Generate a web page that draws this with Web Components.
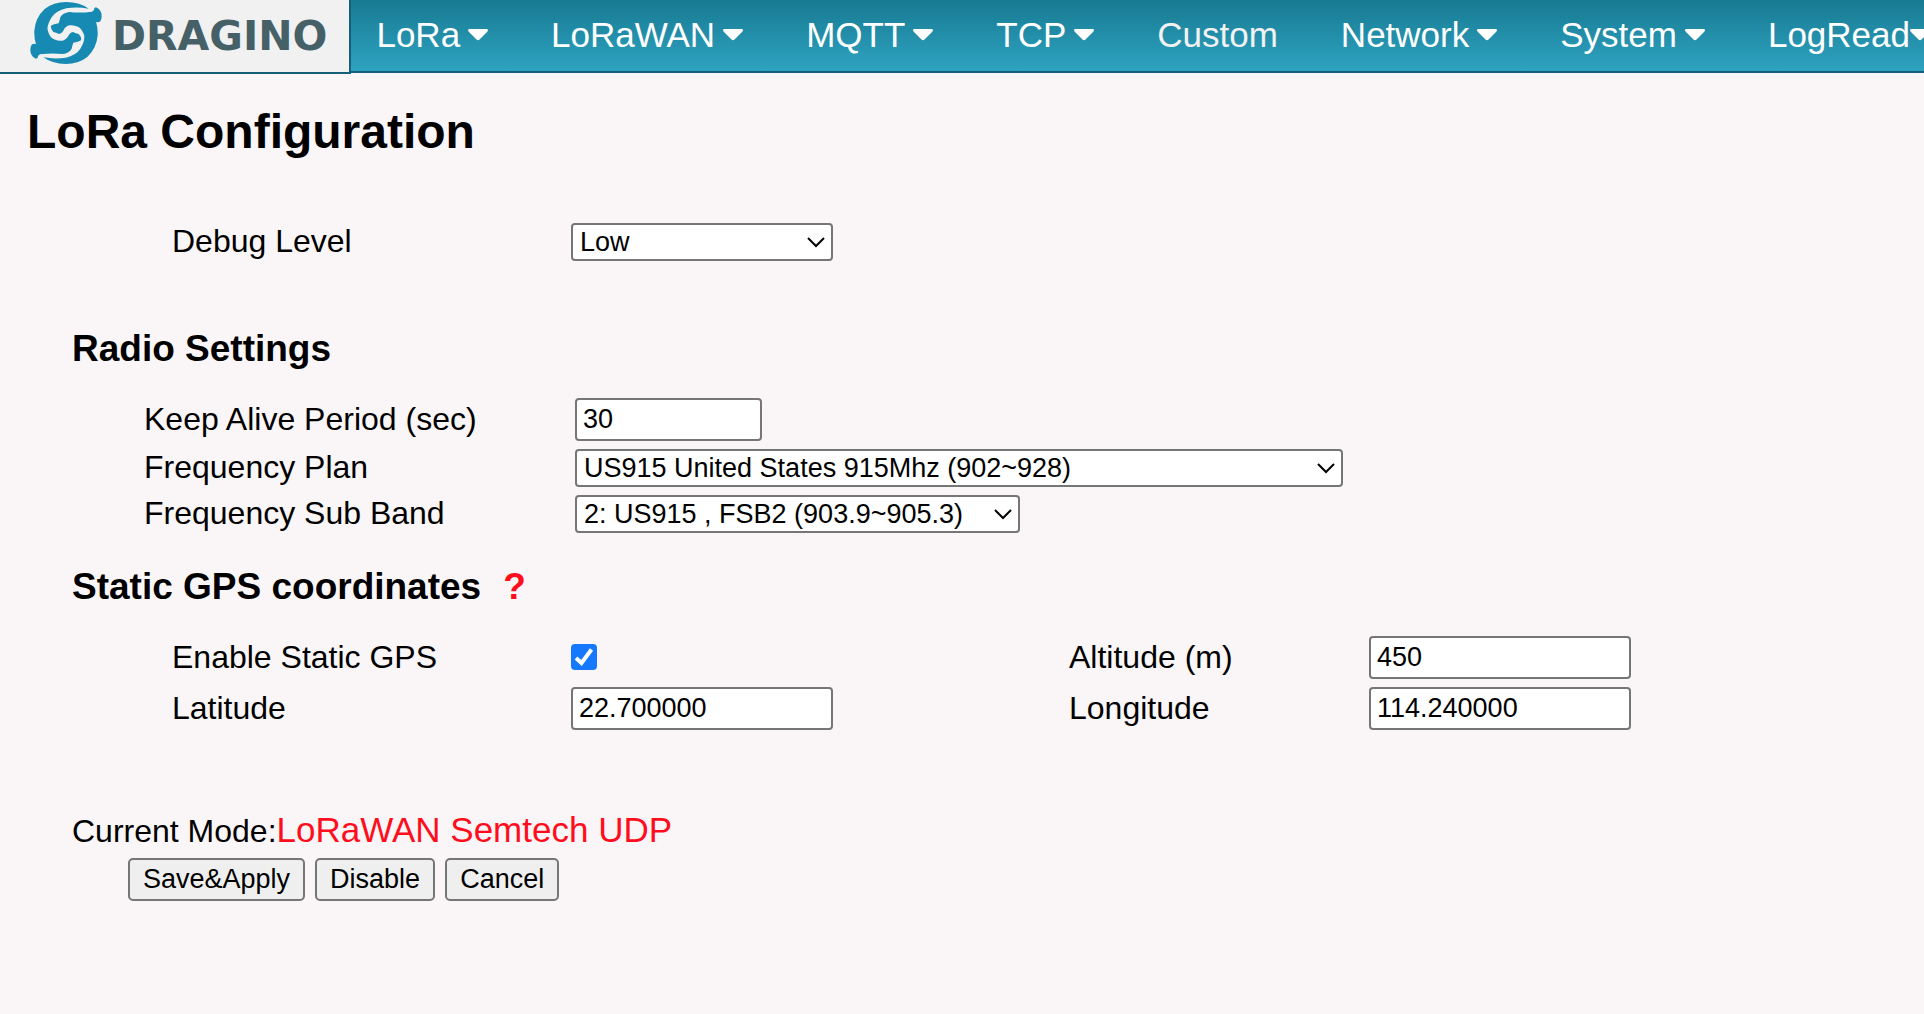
<!DOCTYPE html>
<html lang="en">
<head>
<meta charset="utf-8">
<title>LoRa Configuration</title>
<style>
  html { background: #faf6f8; }
  body { margin: 0; color: #000; font-family: "Liberation Sans", Arial, sans-serif; font-size: 32px; }
</style>
</head>
<body>
<app-header>
  <nav-item menu>LoRa</nav-item>
  <nav-item menu>LoRaWAN</nav-item>
  <nav-item menu>MQTT</nav-item>
  <nav-item menu>TCP</nav-item>
  <nav-item>Custom</nav-item>
  <nav-item menu>Network</nav-item>
  <nav-item menu>System</nav-item>
  <nav-item menu tight>LogRead</nav-item>
</app-header>
<lora-config></lora-config>

<template id="brand-logo">
  <style>
    :host { display: block; }
    a { display: flex; align-items: center; gap: 10px; height: 72px; padding: 0 22px 0 30px;
        color: #466068; text-decoration: none; font: bold 41px/46px "DejaVu Sans", sans-serif; }
    svg { flex: none; width: 72px; height: 62px; margin-bottom: 6px; }
  </style>
  <a href="#">
    <svg viewBox="90 6 216 186" fill="#168ab2" aria-hidden="true">
      <path d="M288 22Q300 27 304 40Q307 55 301 64Q296 68 288 66Q294 82 293 106Q290 145 262 171Q235 192 198 192Q155 191 130 172Q165 178 197 173Q228 166 241 146Q254 126 253 108Q248 88 234 80Q220 74 208 76Q195 80 190 92Q184 102 177 102Q168 97 160 96Q151 87 153 77Q160 72 176 70Q179 62 181 52Q188 39 208 36Q240 40 276 35Q284 31 283 24Z"/>
      <path d="M108 176Q96 171 92 158Q89 143 95 134Q100 130 108 132Q102 116 103 92Q106 53 134 27Q161 6 198 6Q241 7 266 26Q231 20 199 25Q168 32 155 52Q140 76 143 90Q148 112 162 118Q176 124 188 122Q201 118 206 106Q212 96 219 96Q228 101 236 102Q245 111 243 121Q236 126 220 128Q217 136 215 146Q208 159 188 162Q156 158 120 163Q112 167 113 174Z"/>
    </svg>
    <span>DRAGINO</span>
  </a>
</template>

<template id="app-header">
  <style>
    :host { display: flex; align-items: flex-start; overflow: hidden; }
    brand-logo { flex: none; background: #f1f1f1; border: solid #14607a; border-width: 0 2px 2px 0; }
    nav { flex: 1; min-width: 0; display: flex; gap: 63px; height: 71px; padding-left: 25px;
          background: linear-gradient(#187a92, #2ea3c1); border-bottom: 2px solid #14607a; overflow: hidden; }
  </style>
  <brand-logo></brand-logo>
  <nav><slot></slot></nav>
</template>

<template id="nav-item">
  <style>
    :host { display: block; flex: none; }
    a { display: flex; align-items: center; gap: 8px; height: 70px; color: #fff; text-decoration: none; font-size: 35px; line-height: 40px; }
    :host([tight]) a { gap: 0; }
    :host(:not([menu])) a { color: #f2f2f2; }
    :host(:not([menu])) svg { display: none; }
    svg { width: 20px; height: 12px; }
  </style>
  <a href="#"><span><slot></slot></span>
    <svg viewBox="0 0 20 12" fill="#fff" aria-hidden="true"><path d="M1 0H19Q21 1 19 3L11.500 10.500Q10 12 8.500 10.500L1 3Q-1 1 1 0Z"/></svg></a>
</template>

<template id="config-section">
  <style>
    :host { display: block; padding-left: 45px; }
    h3 { margin: 0 0 28px; font-size: 37px; line-height: 43px; }
  </style>
  <h3><slot name="title"></slot></h3>
  <slot></slot>
</template>

<template id="lora-config">
  <style>
    :host { display: block; padding: 30px 27px; }
    h2 { margin: 0 0 63px; font-size: 48px; line-height: 56px; }
    form { margin: 0; }
    .grid { display: grid; gap: 8px 0; align-items: center; justify-items: start; line-height: 36px; }
    .wide { grid-template-columns: 399px 498px 300px 1fr; padding-left: 100px; }
    .radio { grid-template-columns: 431px 1fr; padding-left: 72px; }
    .debug { padding-left: 145px; margin-bottom: 66px; }
    label { padding-bottom: 2px; }
    config-section + config-section { margin-top: 32px; }
    input, select, button { box-sizing: border-box; margin: 0; border: 2px solid #767676; border-radius: 4px;
      color: #000; background-color: #fff; font: 27px/32px "Liberation Sans", Arial, sans-serif; }
    input { width: 262px; height: 43px; padding: 3px 4px 3px 6px; }
    input.short { width: 187px; }
    select { appearance: none; width: 262px; height: 38px; padding: 0 36px 0 7px;
      background-repeat: no-repeat; background-position: right 6px center;
      background-image: url("data:image/svg+xml,%3Csvg xmlns='http://www.w3.org/2000/svg' width='18' height='12'%3E%3Cpath d='M1 2L9 10L17 2' fill='none' stroke='%23000' stroke-width='2'/%3E%3C/svg%3E"); }
    #plan { width: 768px; max-width: 100%; }
    #band { width: 445px; max-width: 100%; }
    input[type=checkbox] { appearance: none; width: 26px; height: 26px; margin-bottom: 2px; padding: 0; border: 0; background-color: #fff; box-shadow: inset 0 0 0 2px #767676; }
    input[type=checkbox]:checked { box-shadow: none; background: #1677ff url("data:image/svg+xml,%3Csvg xmlns='http://www.w3.org/2000/svg' width='26' height='26'%3E%3Cpath d='M5 14L10.500 19L20.500 5.500' fill='none' stroke='%23fff' stroke-width='4'/%3E%3C/svg%3E"); }
    .mode { margin: 80px 0 0 45px; line-height: 40px; }
    .mode span { color: #ff0d1c; font-size: 35px; }
    .actions { display: flex; gap: 10px; margin: 7px 0 0 101px; }
    button { height: 43px; padding: 0 13px 2px; background-color: #efefef; border-radius: 5px; }
    .help { color: #ff0d1c; text-decoration: none; margin-left: 22px; }
  </style>
  <h2>LoRa Configuration</h2>
  <form onsubmit="return false">
    <div class="grid wide debug">
      <label for="debug">Debug Level</label>
      <select id="debug"><option>Low</option></select>
    </div>
    <config-section>
      <span slot="title">Radio Settings</span>
      <div class="grid radio">
        <label for="keep">Keep Alive Period (sec)</label><input id="keep" class="short" value="30">
        <label for="plan">Frequency Plan</label><select id="plan"><option>US915 United States 915Mhz (902~928)</option></select>
        <label for="band">Frequency Sub Band</label><select id="band"><option>2: US915 , FSB2 (903.9~905.3)</option></select>
      </div>
    </config-section>
    <config-section>
      <span slot="title">Static GPS coordinates<a class="help" href="#">?</a></span>
      <div class="grid wide">
        <label for="gps">Enable Static GPS</label><input id="gps" type="checkbox" checked>
        <label for="alt">Altitude (m)</label><input id="alt" value="450">
        <label for="lat">Latitude</label><input id="lat" value="22.700000">
        <label for="lon">Longitude</label><input id="lon" value="114.240000">
      </div>
    </config-section>
    <div class="mode">Current Mode:<span>LoRaWAN Semtech UDP</span></div>
    <div class="actions">
      <button type="submit">Save&amp;Apply</button>
      <button type="button">Disable</button>
      <button type="reset">Cancel</button>
    </div>
  </form>
</template>

<script>
  class TemplateElement extends HTMLElement {
    constructor() {
      super();
      const template = document.getElementById(this.localName);
      this.attachShadow({ mode: 'open' }).append(template.content.cloneNode(true));
    }
  }
  customElements.define('brand-logo', class BrandLogo extends TemplateElement {});
  customElements.define('nav-item', class NavItem extends TemplateElement {});
  customElements.define('app-header', class AppHeader extends TemplateElement {});
  customElements.define('config-section', class ConfigSection extends TemplateElement {});
  customElements.define('lora-config', class LoraConfig extends TemplateElement {});
</script>
</body>
</html>
